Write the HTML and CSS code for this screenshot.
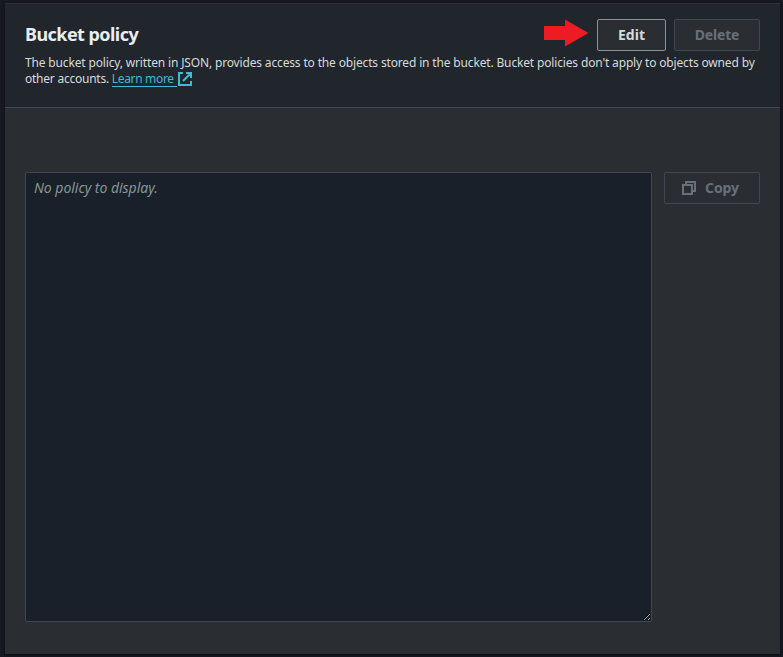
FILE: index.html
```html
<!DOCTYPE html>
<html lang="en">
<head>
<meta charset="utf-8">
<title>Bucket policy</title>
<link rel="stylesheet" href="styles.css">
</head>
<body>
<section class="panel">
  <header class="panel-header">
    <div class="heading-row">
      <h2 class="title"><span>Bucket policy</span></h2>
      <div class="actions">
        <svg class="arrow" width="45" height="28" viewBox="0 0 45 28"><path d="M0 7h21V0.5L44.500 14 21 27.500V21H0z" fill="#ed1c24"/></svg>
        <button class="btn btn-edit"><span>Edit</span></button>
        <button class="btn btn-delete" disabled><span>Delete</span></button>
      </div>
    </div>
    <p class="description"><span class="line-one">The bucket policy, written in JSON, provides access to the objects stored in the bucket. Bucket policies don't apply to objects owned by</span><br><span class="line-two">other accounts. </span><a class="link" href="#"><span>Learn more</span></a><svg class="external" width="14" height="14" viewBox="0 0 14 14" fill="none" stroke="#44b9d6" stroke-width="2"><path d="M5 1H1v12h12V9M8 1h5v5M13 1L5 9"/></svg></p>
  </header>
  <div class="panel-body">
    <textarea class="policy" placeholder="No policy to display." readonly></textarea>
    <button class="btn btn-copy" disabled>
      <svg width="14" height="14" viewBox="0 0 14 14" fill="none" stroke="#687078" stroke-width="2"><path d="M1 4h9v9H1zM4 4V1h9v9h-3"/></svg>
      <span>Copy</span>
    </button>
  </div>
</section>
</body>
</html>
```
FILE: styles.css
```css
* { box-sizing: border-box; }
body {
  margin: 0;
  height: 657px;
  padding: 3px 3px 3px 5px;
  overflow: hidden;
  background: #16191f;
  color: #d5dbdb;
  font-family: "Noto Sans", "Open Sans", sans-serif;
}
.panel {
  height: 651px;
  background: #2a2e33;
  border-top: 1px solid #2f3338;
  box-shadow: 0 1px 2px #0b0d11;
}
.panel-header {
  height: 104px;
  padding: 15px 20px 0;
  background: #21252c;
  border-bottom: 1px solid #414750;
}
.heading-row {
  display: flex;
  justify-content: space-between;
  height: 32px;
}
.title {
  margin: 0;
  color: #eaeded;
  font-size: 18px;
  font-weight: 700;
  line-height: 30px;
}
.title span { letter-spacing: -0.55px; }
.actions { display: flex; }
.arrow { margin: 0 8px 0 0; }
.btn {
  display: flex;
  align-items: center;
  justify-content: center;
  height: 32px;
  padding: 0;
  border: 1px solid #414750;
  border-radius: 2px;
  background: #2a2e33;
  color: #687078;
  font: 700 14px/20px "Noto Sans", sans-serif;
}
.btn-edit {
  width: 69px;
  margin-right: 8px;
  border-color: #879596;
  color: #d5dbdb;
}
.btn-delete {
  width: 86px;
  letter-spacing: -0.2px;
}
.description {
  margin: 4px 0 0;
  font-size: 12px;
  line-height: 16px;
  white-space: nowrap;
}
.line-one { letter-spacing: -0.155px; }
.line-two { letter-spacing: -0.24px; }
.link {
  display: inline-block;
  width: 65px;
  height: 16px;
  border-bottom: 1px solid #44b9d6;
  color: #44b9d6;
  letter-spacing: -0.33px;
  text-decoration: none;
}
.external {
  margin-left: 1.5px;
  vertical-align: -3px;
}
.panel-body {
  display: flex;
  align-items: flex-start;
  gap: 12px;
  padding: 64px 20px 0;
}
.policy {
  width: 627px;
  height: 450px;
  padding: 4px 8px;
  border: 1px solid #414750;
  border-radius: 2px;
  outline: 0;
  background: #1a2029;
  color: #d5dbdb;
  font: 14px/22px "Noto Sans", sans-serif;
  resize: both;
}
.policy::placeholder {
  color: #879596;
  font-style: italic;
  letter-spacing: -0.03px;
}
.btn-copy {
  width: 96px;
  gap: 9px;
  padding-right: 3px;
  letter-spacing: -0.1px;
}
```
